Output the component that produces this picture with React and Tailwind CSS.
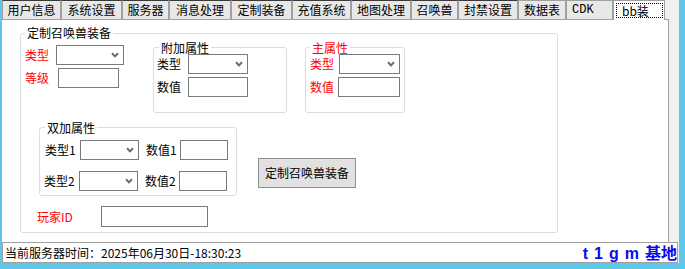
import React from "react";

const tabs = [
  { t: "用户信息", w: "w-[59px]", top: "border-t-[#3a3a3a]" },
  { t: "系统设置", w: "w-[61px]", top: "border-t-[#3a3a3a]" },
  { t: "服务器", w: "w-[47px]", top: "border-t-[#3a3a3a]" },
  { t: "消息处理", w: "w-[62px]", top: "border-t-[#3a3a3a]" },
  { t: "定制装备", w: "w-[61px]", top: "border-t-[#3a3a3a]" },
  { t: "充值系统", w: "w-[59px]", top: "border-t-[#3a3a3a]" },
  { t: "地图处理", w: "w-[60px]", top: "border-t-[#3a3a3a]" },
  { t: "召唤兽", w: "w-[47px]", top: "border-t-[#3a3a3a]" },
  { t: "封禁设置", w: "w-[60px]", top: "border-t-[#3a3a3a]" },
  { t: "数据表", w: "w-[48px]", top: "border-t-[#a0a0a0]" },
];

function Chevron() {
  return (
    <svg width="8" height="6" viewBox="0 0 8 6">
      <path d="M1 1.2 L4 4.4 L7 1.2" stroke="#6a6a6a" strokeWidth="2" fill="none" />
    </svg>
  );
}

function Select({ w }) {
  return (
    <div className={`${w} h-[20px] border border-[#7a7a7a] bg-white flex items-center justify-end pr-[4px]`}>
      <Chevron />
    </div>
  );
}

function Input({ w, h = "h-[20px]" }) {
  return <div className={`${w} ${h} border border-[#7a7a7a] bg-white`} />;
}

function Label({ w, red, children }) {
  return (
    <span className={`${w} text-[12px] leading-[14px] whitespace-nowrap ${red ? "text-[#ff0000]" : "text-black"}`}>
      {children}
    </span>
  );
}

export default function App() {
  return (
    <div className="w-[685px] h-[269px] bg-[#5ec7e8] pl-[2px] overflow-hidden font-['Noto_Sans_CJK_SC',sans-serif] text-black">
      <div className="w-[677px] h-[263px] bg-[#f0f0f0] flex flex-col">
        {/* Tabs */}
        <div className="flex w-[667px] h-[20px]">
          {tabs.map((tb) => (
            <div
              key={tb.t}
              className={`${tb.w} ${tb.top} h-[20px] shrink-0 bg-[#e8e8e8] border border-[#a0a0a0] flex items-center justify-center text-[12px] leading-[14px]`}
            >
              {tb.t}
            </div>
          ))}
          <div className="w-[47px] h-[20px] shrink-0 bg-[#e8e8e8] border border-[#a0a0a0] flex items-center pl-[5px] text-[12px] leading-[14px] font-['Liberation_Mono',monospace]">
            CDK
          </div>
          <div className="w-[52px] h-[20px] shrink-0 bg-white border-l border-r border-t border-[#a0a0a0]">
            <div className="ml-[2px] mt-[2px] w-[47px] h-[15px] border border-dotted border-black text-[12px] leading-[13px] pl-[5px]">
              bb装
            </div>
          </div>
          <div className="flex-1 h-[20px] border-b border-[#a0a0a0]" />
        </div>

        {/* Panel */}
        <div className="w-[667px] h-[222px] bg-white border-r border-[#a0a0a0] pt-[6px] pl-[18px]">
          <fieldset className="w-[538px] border border-[#d5dfe5] rounded-[3px] pb-[5px]">
            <legend className="ml-[4px] px-[2px] text-[12px] leading-[14px]">定制召唤兽装备</legend>

            <div className="flex items-start">
              <div className="flex flex-col gap-[3px] pl-[4px] mt-[5px] w-[103px]">
                <div className="flex items-center">
                  <Label w="w-[31px]" red>类型</Label>
                  <Select w="w-[68px]" />
                </div>
                <div className="flex items-center">
                  <Label w="w-[33px]" red>等级</Label>
                  <Input w="w-[61px]" />
                </div>
              </div>

              <fieldset className="ml-[29px] mt-[1px] w-[134px] border border-[#d5dfe5] rounded-[3px] pb-[15px]">
                <legend className="ml-[5px] px-[2px] text-[12px] leading-[13px]">附加属性</legend>
                <div className="flex flex-col gap-[3px] pl-[3px]">
                  <div className="flex items-center">
                    <Label w="w-[31px]">类型</Label>
                    <Select w="w-[60px]" />
                  </div>
                  <div className="flex items-center">
                    <Label w="w-[31px]">数值</Label>
                    <Input w="w-[60px]" />
                  </div>
                </div>
              </fieldset>

              <fieldset className="ml-[18px] mt-[1px] w-[100px] border border-[#d5dfe5] rounded-[3px] pb-[15px]">
                <legend className="ml-[4px] px-[2px] text-[12px] leading-[13px] text-[#ff0000]">主属性</legend>
                <div className="flex flex-col gap-[3px] pl-[4px]">
                  <div className="flex items-center">
                    <Label w="w-[29px]" red>类型</Label>
                    <Select w="w-[61px]" />
                  </div>
                  <div className="flex items-center">
                    <Label w="w-[28px]" red>数值</Label>
                    <Input w="w-[62px]" />
                  </div>
                </div>
              </fieldset>
            </div>

            <div className="flex items-start mt-[8px]">
              <fieldset className="ml-[18px] w-[198px] border border-[#d5dfe5] rounded-[3px] pb-[4px]">
                <legend className="ml-[5px] px-[2px] text-[12px] leading-[13px]">双加属性</legend>
                <div className="flex items-center mt-[6px] pl-[5px]">
                  <Label w="w-[35px]">类型1</Label>
                  <Select w="w-[59px]" />
                  <Label w="w-[34px] ml-[7px]">数值1</Label>
                  <Input w="w-[48px]" />
                </div>
                <div className="flex items-center mt-[11px] pl-[4px]">
                  <Label w="w-[35px]">类型2</Label>
                  <Select w="w-[59px]" />
                  <Label w="w-[34px] ml-[7px]">数值2</Label>
                  <Input w="w-[48px]" />
                </div>
              </fieldset>
              <button className="ml-[21px] mt-[37px] w-[98px] h-[30px] bg-[#e1e1e1] border border-[#8f8f8f] text-[12px] leading-[14px]">
                定制召唤兽装备
              </button>
            </div>

            <div className="flex items-center mt-[10px] pl-[16px]">
              <Label w="w-[64px]" red>玩家ID</Label>
              <Input w="w-[107px]" h="h-[21px]" />
            </div>
          </fieldset>
        </div>

        {/* Status bar */}
        <div className="w-[676px] h-[21px] border border-[#a0a0a0] bg-white flex items-center justify-between pl-[2px]">
          <span className="text-[12px] leading-[14px]">当前服务器时间：2025年06月30日-18:30:23</span>
          <span className="flex items-center gap-[6px] mt-[3px] text-[16px] leading-[16px] font-bold text-[#0b0be8] font-['Liberation_Sans','Noto_Sans_CJK_SC',sans-serif]">
            <span>t</span>
            <span>1</span>
            <span>g</span>
            <span>m</span>
            <span>基地</span>
          </span>
        </div>
      </div>
    </div>
  );
}
